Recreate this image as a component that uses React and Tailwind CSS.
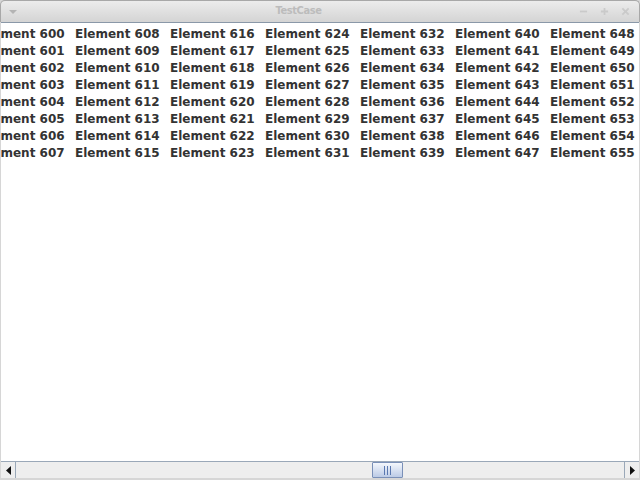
import { useState } from 'react'

const columnas = [0, 1, 2, 3, 4, 5, 6]
const filas = [0, 1, 2, 3, 4, 5, 6, 7]

export default function App() {
  const [scroll] = useState(373)

  return (
    <div className="w-[640px] h-[480px] bg-[#d6d6d6] flex flex-col overflow-hidden" style={{ fontFamily: '"DejaVu Sans", sans-serif' }}>
      <div className="relative h-[22px] shrink-0 rounded-t-[5px] bg-gradient-to-b from-[#ececec] to-[#d4d4d4] border border-[#a8a8a8] border-b-0 flex items-center">
        <svg width="10" height="6" viewBox="0 0 10 6" className="ml-[7px] mt-[1px]">
          <path d="M1 1 L9 1 L5 5 Z" fill="#b4b4b4" />
        </svg>
        <div className="flex-1 text-center text-[11px] font-bold text-[#bcbcbc] tracking-[-0.4px]" style={{ fontFamily: '"DejaVu Sans Condensed", "DejaVu Sans", sans-serif' }}>TestCase</div>
        <div className="flex items-center gap-[12px] mr-[9px]">
          <svg width="9" height="9" viewBox="0 0 10 10"><path d="M1 5 H9" stroke="#cacaca" strokeWidth="2" /></svg>
          <svg width="9" height="9" viewBox="0 0 10 10"><path d="M1 5 H9 M5 1 V9" stroke="#cacaca" strokeWidth="2" /></svg>
          <svg width="9" height="9" viewBox="0 0 10 10"><path d="M1.5 1.5 L8.5 8.5 M8.5 1.5 L1.5 8.5" stroke="#cacaca" strokeWidth="2" /></svg>
        </div>
      </div>
      <div className="flex-1 flex flex-col mx-[1px] mb-[2px] border-t border-[#8a98a8] bg-white overflow-hidden">
        <div className="flex-1 overflow-hidden pt-[3px]">
          <div className="flex ml-[-21px]">
            {columnas.map(function(c) {
              return (
                <div key={c} className="w-[95px] shrink-0 flex flex-col">
                  {filas.map(function(f) {
                    return (
                      <div key={f} className="h-[17px] leading-[17px] text-[12px] font-bold text-[#333333] whitespace-nowrap">
                        Element {600 + c * 8 + f}
                      </div>
                    )
                  })}
                </div>
              )
            })}
          </div>
        </div>
        <div className="h-[17px] shrink-0 flex border-t border-[#9aa8b8] bg-[#eeeeee]">
          <div className="w-[15px] h-full flex items-center justify-center border-r border-[#9aa8b8] bg-[#eeeeee]">
            <svg width="5" height="9" viewBox="0 0 5 9"><path d="M5 0 L0 4.5 L5 9 Z" fill="#111" /></svg>
          </div>
          <div className="relative flex-1 bg-[#eeeeee]">
            <div className="absolute top-0 bottom-0 w-[31px] border border-[#7a90b8] rounded-[1px] bg-gradient-to-b from-[#f4f7fc] to-[#bccbe6] flex items-center justify-center gap-[2px]" style={{ left: scroll - 17 }}>
              <div className="w-[1px] h-[9px] bg-[#5a78b0]" />
              <div className="w-[1px] h-[9px] bg-[#5a78b0]" />
              <div className="w-[1px] h-[9px] bg-[#5a78b0]" />
            </div>
          </div>
          <div className="w-[15px] h-full flex items-center justify-center border-l border-[#9aa8b8] bg-[#eeeeee]">
            <svg width="5" height="9" viewBox="0 0 5 9"><path d="M0 0 L5 4.5 L0 9 Z" fill="#111" /></svg>
          </div>
        </div>
      </div>
    </div>
  )
}
